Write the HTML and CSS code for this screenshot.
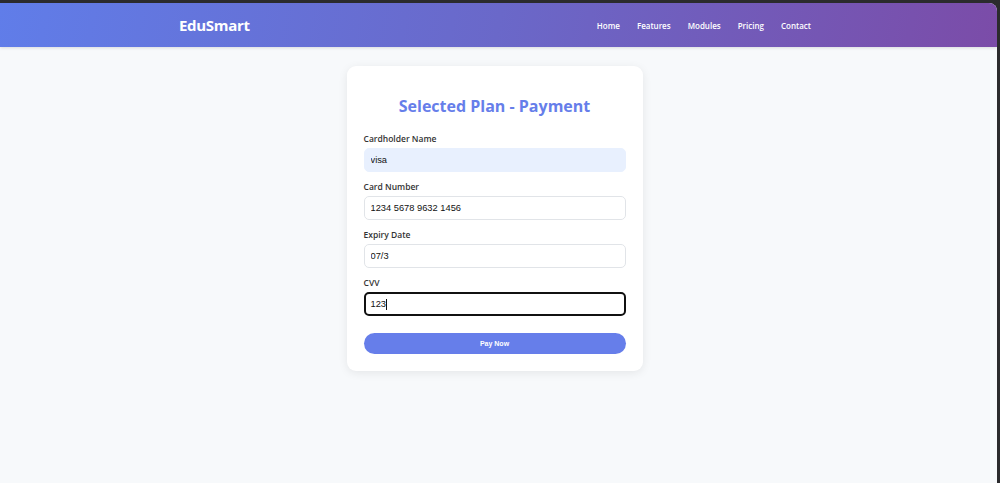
FILE: index.html
```html
<!DOCTYPE html>
<html lang="en">
<head>
<meta charset="utf-8">
<title>EduSmart - Payment</title>
<link rel="stylesheet" href="styles.css">
</head>
<body>
<div class="page">
  <header class="topbar">
    <div class="container nav-row">
      <div class="logo">EduSmart</div>
      <nav class="nav">
        <a href="#">Home</a>
        <a href="#">Features</a>
        <a href="#">Modules</a>
        <a href="#">Pricing</a>
        <a href="#">Contact</a>
      </nav>
    </div>
  </header>
  <main class="main">
    <form class="card">
      <h1 class="title">Selected Plan - Payment</h1>
      <div class="field">
        <label class="label">Cardholder Name</label>
        <input class="input input-autofill" type="text" value="visa">
      </div>
      <div class="field">
        <label class="label">Card Number</label>
        <input class="input" type="text" value="1234 5678 9632 1456">
      </div>
      <div class="field">
        <label class="label">Expiry Date</label>
        <input class="input" type="text" value="07/3">
      </div>
      <div class="field">
        <label class="label">CVV</label>
        <div class="input input-focus"><span>123</span><span class="caret"></span></div>
      </div>
      <button type="button" class="btn">Pay Now</button>
    </form>
  </main>
</div>
</body>
</html>
```
FILE: styles.css
```css
* { box-sizing: border-box; }
html, body { margin: 0; padding: 0; }
body {
  background: #2b2b2d;
  font-family: "Open Sans", "Noto Sans", sans-serif;
  height: 483px;
  overflow: hidden;
}
.page {
  margin-top: 3px;
  margin-right: 3px;
  height: 480px;
  background: #f7f9fb;
  border-top-right-radius: 8px;
  overflow: hidden;
}
.topbar {
  height: 44px;
  background: linear-gradient(100deg, #607de9 0%, #6a68c9 50%, #7b4ca8 100%);
  box-shadow: 0 1px 3px rgba(0,0,0,0.12);
  padding-right: 7px;
}
.container {
  width: 632px;
  margin: 0 auto;
}
.nav-row {
  height: 44px;
  display: flex;
  align-items: center;
  justify-content: space-between;
}
.logo {
  color: #fff;
  font-weight: 700;
  font-size: 15px;
  letter-spacing: -0.3px;
}
.nav {
  display: flex;
  gap: 17px;
}
.nav a {
  color: #fff;
  text-decoration: none;
  font-size: 8px;
  font-weight: 600;
}
.main {
  padding: 19px 8px 0 0;
  display: flex;
  justify-content: center;
}
.card {
  width: 296px;
  background: #fff;
  border-radius: 9px;
  box-shadow: 0 2px 10px rgba(0,0,0,0.08);
  padding: 26px 17px 17px;
  display: flex;
  flex-direction: column;
}
.title {
  margin: 0 0 12px;
  text-align: center;
  color: #667eea;
  font-size: 16px;
  font-weight: 700;
  line-height: 28px;
}
.field {
  display: flex;
  flex-direction: column;
  margin-bottom: 8px;
}
.label {
  font-size: 8.5px;
  color: #333;
  line-height: 14px;
  margin-bottom: 2px;
  font-weight: 600;
}
.input {
  height: 24px;
  border: 1px solid #e1e4e8;
  border-radius: 5px;
  padding: 0 6px;
  font-family: "Liberation Sans", Arial, sans-serif;
  font-size: 9.3px;
  color: #111;
  background: #fff;
  outline: none;
  width: 100%;
  display: flex;
  align-items: center;
}
.input-autofill {
  background: #e8f0fe;
  border-color: #e8f0fe;
}
.input-focus {
  border: 2px solid #111;
  padding-left: 5px;
}
.caret {
  display: inline-block;
  width: 1px;
  height: 11px;
  background: #111;
}
.btn {
  margin-top: 9px;
  height: 21px;
  border: none;
  border-radius: 11px;
  background: #667eea;
  color: #fff;
  font-family: "Liberation Sans", Arial, sans-serif;
  font-weight: 700;
  font-size: 7px;
  width: 100%;
}
```
